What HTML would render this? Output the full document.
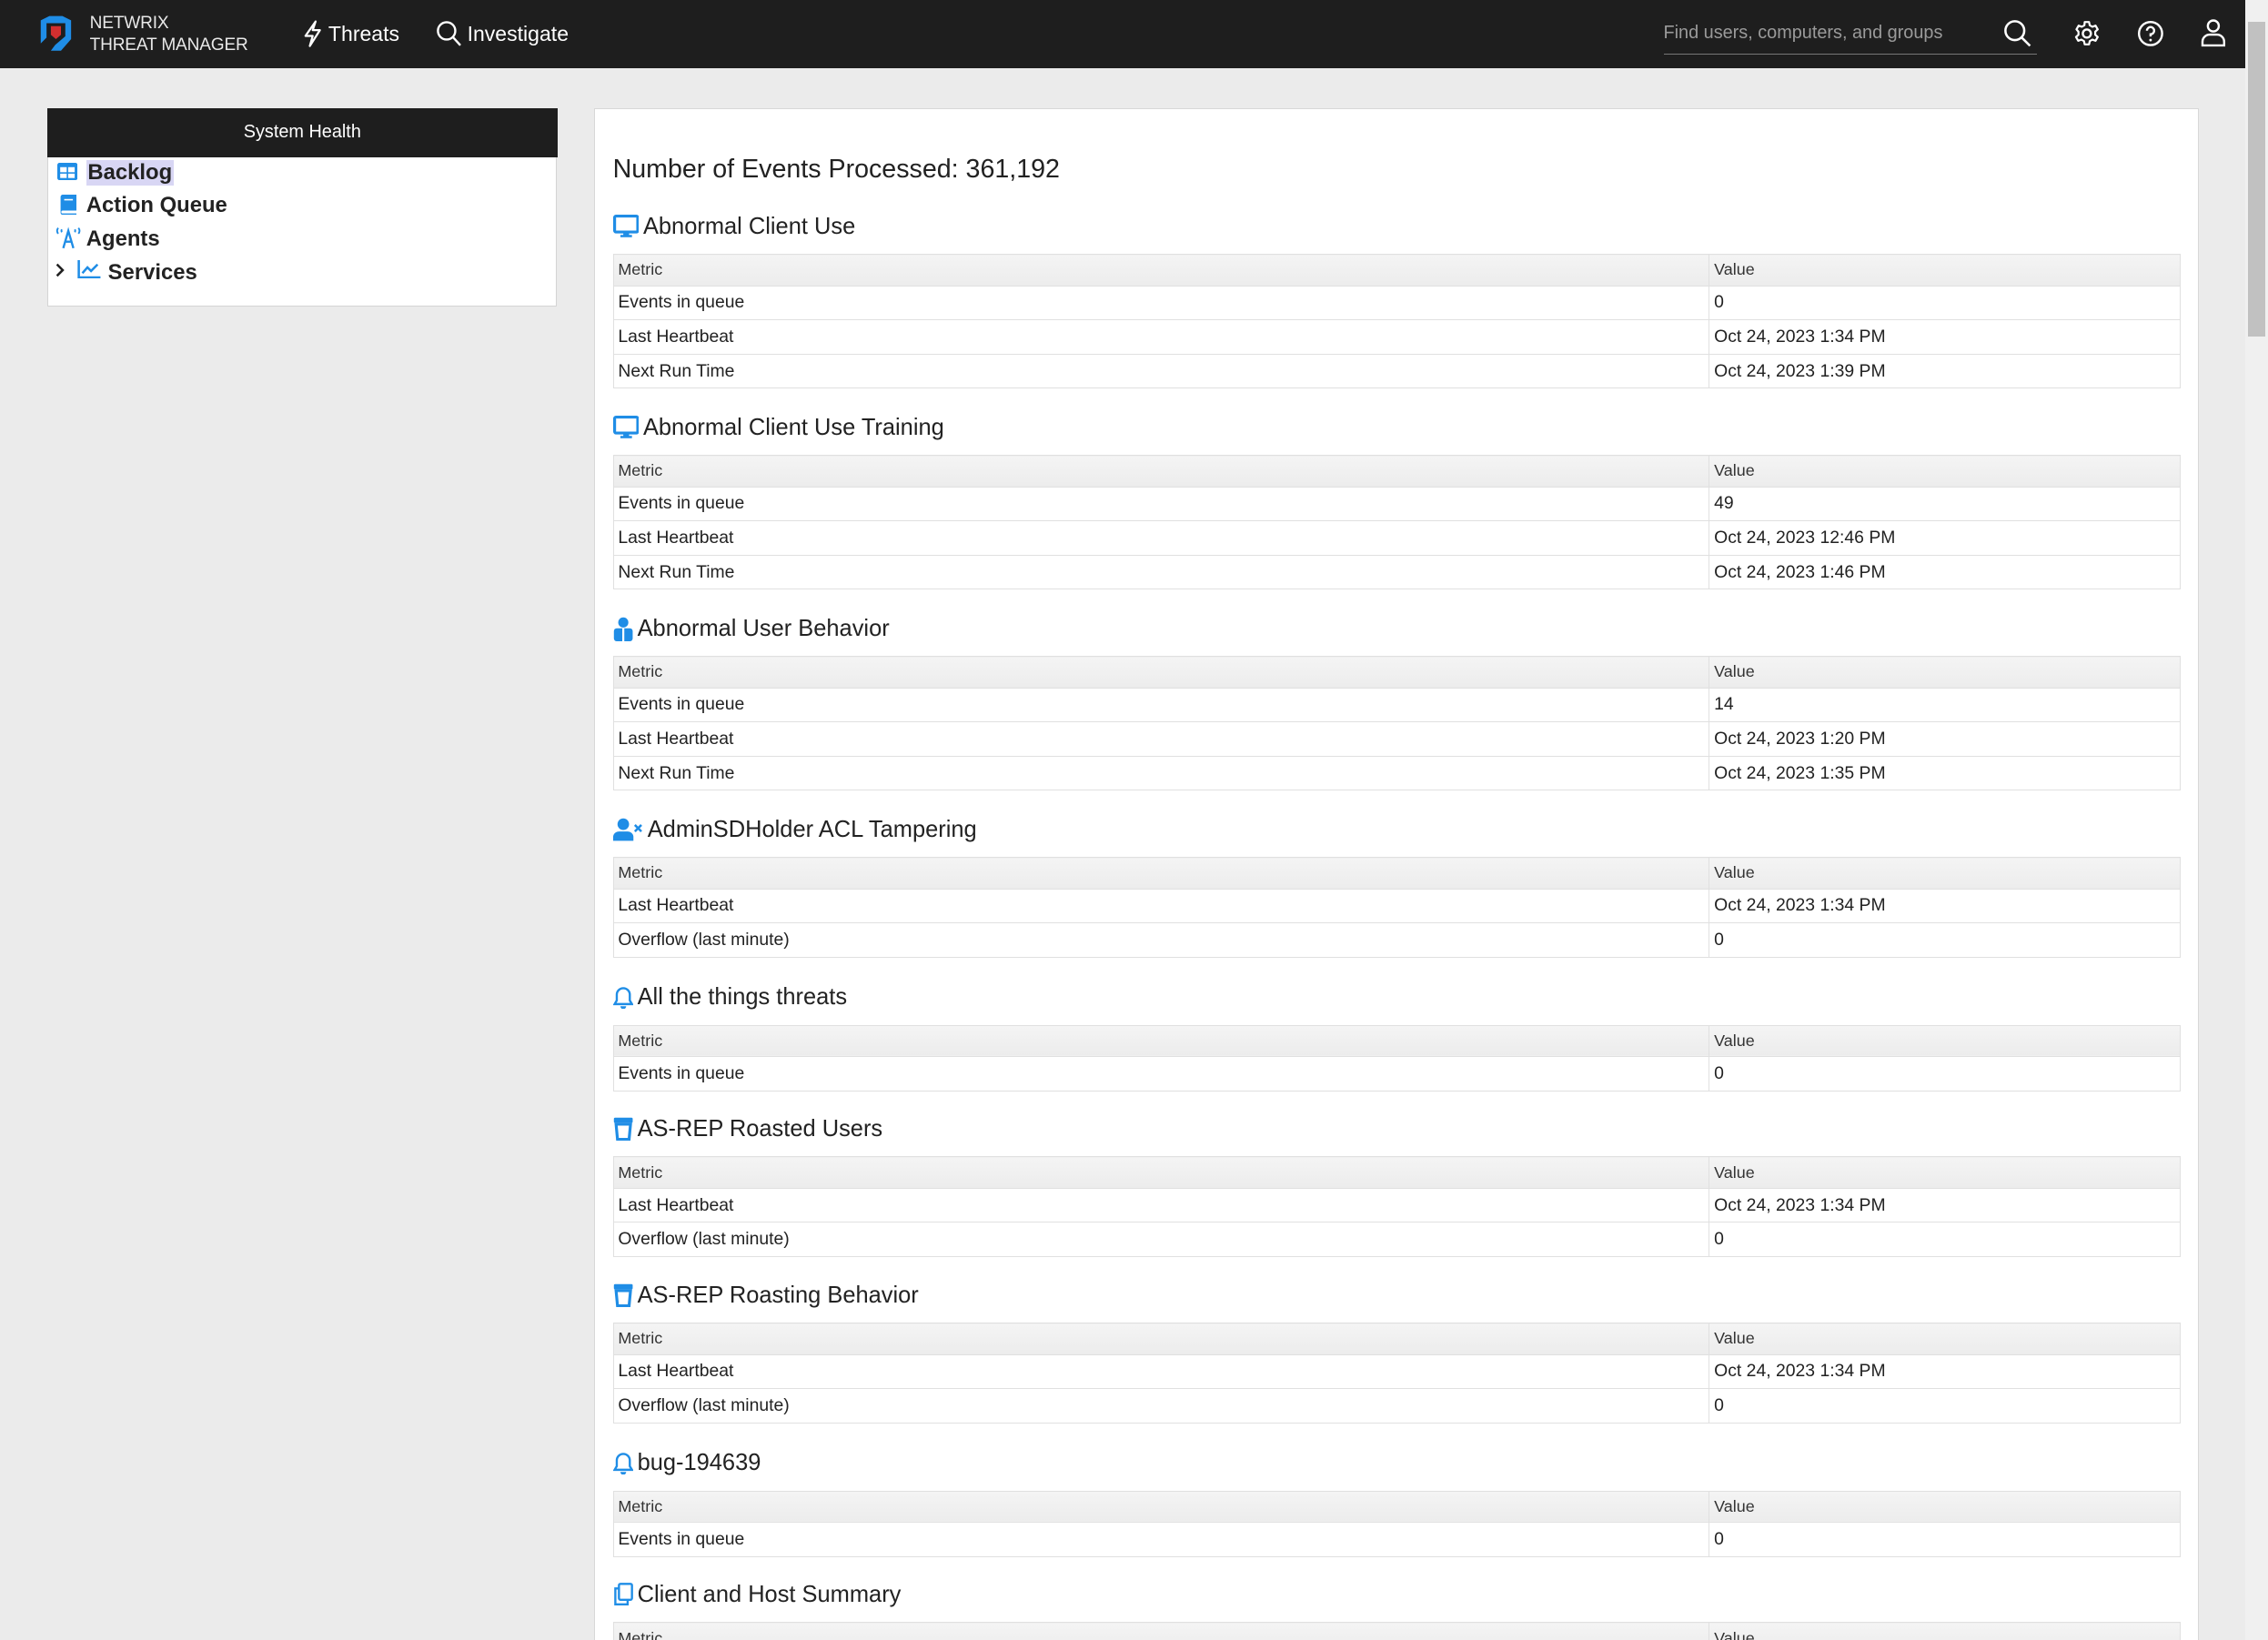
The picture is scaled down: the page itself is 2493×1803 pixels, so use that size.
<!DOCTYPE html>
<html><head><meta charset="utf-8"><style>
html{margin:0;padding:0;height:1803px;overflow:hidden;background:#ebebeb}
body{margin:0;padding:0;width:1568px;height:1134px;overflow:hidden;zoom:1.59;background:#ebebeb;font-family:"Liberation Sans",Arial,sans-serif;color:#222;position:relative;}
.top{position:absolute;left:0;top:0;width:1552px;height:47px;background:#1e1e1e;color:#fff;}
.logo{position:absolute;left:25px;top:10px;}
.brand{position:absolute;left:62px;top:9px;font-size:12px;line-height:15px;color:#e8e8e8;letter-spacing:-0.1px}
.nav{position:absolute;top:15px;font-size:14.5px;color:#fff}
.search{position:absolute;left:1150px;top:16px;width:258px;height:21px;border-bottom:1px solid #777;color:#9a9a9a;font-size:12.5px;}
.ic{position:absolute;top:12px}
.side{position:absolute;left:33px;top:75px;width:352px;height:137px;background:#fff;border:1px solid #d4d4d4;box-sizing:border-box}
.side .hd{background:#1e1e1e;color:#fff;height:34px;line-height:33px;text-align:center;font-size:12.5px;margin:-1px -1px 0 -1px}
.it{position:absolute;font-size:15px;font-weight:bold;color:#222}
.main{position:absolute;left:411px;top:75px;width:1109px;height:1059px;background:#fff;border:1px solid #d8d8d8;border-bottom:none;box-sizing:border-box;padding:0 12px;overflow:hidden}
h1{font-weight:normal;font-size:18px;margin:0;position:absolute;left:12px;top:31px}
.sec{position:absolute;left:12px;width:1084px}
.sec h3{font-weight:normal;font-size:16px;height:22px;line-height:22px;margin:0 0 8px 0;display:flex;align-items:center;gap:3px}
table{width:100%;border-collapse:collapse;font-size:12.2px}
td{border:1px solid #e0e0e0;padding:0 3px;height:23px}
tr.h td{background:linear-gradient(#f4f4f4,#ececec);height:21px;font-size:11.3px;color:#333}
td.v{width:319px}
.sb{position:absolute;left:1552px;top:0;width:16px;height:1134px;background:#f0f0f0}
.th{position:absolute;left:1554px;top:15px;width:12px;height:218px;background:#c1c1c1}
</style></head><body>
<div class="top">
 <svg class="logo" width="27" height="27" viewBox="0 0 27 27"><path d="M3 4 L9 1 L18 1 L24 4 L24 17 L17 25 L10 25 L13 21 L20 15 L20 6 L7 6 L7 16 L3 20 Z" fill="#1f8de6"/><path d="M10 8 L17 8 L17 14 L13.5 17 L10 14Z" fill="#d32f2f"/></svg>
 <div class="brand">NETWRIX<br>THREAT MANAGER</div>
 <svg class="ic" style="left:208px;top:14px" width="16" height="19" viewBox="0 0 16 19"><path d="M10 1 L3 11 L8 11 L6 18 L13 7 L8 7 Z" fill="none" stroke="#fff" stroke-width="1.4" stroke-linejoin="round"/></svg>
 <div class="nav" style="left:227px">Threats</div>
 <svg class="ic" style="left:301px;top:14px" width="18" height="19" viewBox="0 0 18 19"><circle cx="7.5" cy="7.5" r="6" fill="none" stroke="#fff" stroke-width="1.5"/><path d="M12 12 L17 17.5" stroke="#fff" stroke-width="1.5"/></svg>
 <div class="nav" style="left:323px">Investigate</div>
 <div class="search">Find users, computers, and groups</div>
 <svg class="ic" style="left:1385px;top:13px" width="20" height="20" viewBox="0 0 20 20"><circle cx="8" cy="8" r="6.5" fill="none" stroke="#fff" stroke-width="1.6"/><path d="M13 13 L18.5 18.5" stroke="#fff" stroke-width="1.6"/></svg>
 <svg class="ic" style="left:1433px;top:13px" width="20" height="20" viewBox="0 0 20 20"><circle cx="10" cy="10" r="2.8" fill="none" stroke="#fff" stroke-width="1.5"/><path d="M8.5 2h3l.5 2.3 1.8 1 2.2-.8 1.5 2.6-1.7 1.6v2.1l1.7 1.6-1.5 2.6-2.2-.8-1.8 1-.5 2.3h-3l-.5-2.3-1.8-1-2.2.8-1.5-2.6 1.7-1.6V8.7L2.8 7.1l1.5-2.6 2.2.8 1.8-1z" fill="none" stroke="#fff" stroke-width="1.4" stroke-linejoin="round"/></svg>
 <svg class="ic" style="left:1477px;top:13px" width="20" height="20" viewBox="0 0 20 20"><circle cx="10" cy="10" r="8" fill="none" stroke="#fff" stroke-width="1.5"/><path d="M7.5 8 A2.5 2.5 0 1 1 10 10.5 V12" fill="none" stroke="#fff" stroke-width="1.5"/><circle cx="10" cy="14.5" r="0.9" fill="#fff"/></svg>
 <svg class="ic" style="left:1520px;top:12px" width="20" height="22" viewBox="0 0 20 22"><circle cx="10" cy="6" r="3.8" fill="none" stroke="#fff" stroke-width="1.5"/><path d="M2.5 19.5 V17 A5 5 0 0 1 7.5 12 H12.5 A5 5 0 0 1 17.5 17 V19.5 Z" fill="none" stroke="#fff" stroke-width="1.5"/></svg>
</div>
<div class="side"><div class="hd">System Health</div>
 <svg style="position:absolute;left:6px;top:37px" width="14" height="12" viewBox="0 0 14 12"><rect x="0" y="0" width="14" height="12" rx="1.5" fill="#1f8de6"/><rect x="2" y="3" width="4.5" height="3.5" fill="#fff"/><rect x="7.5" y="3" width="4.5" height="3.5" fill="#fff"/><rect x="2" y="7.5" width="4.5" height="3" fill="#fff"/><rect x="7.5" y="7.5" width="4.5" height="3" fill="#fff"/></svg>
 <div class="it" style="left:26px;top:35px;background:#d8d6f4;padding:0 1px">Backlog</div>
 <svg style="position:absolute;left:7px;top:59px" width="12" height="14" viewBox="0 0 12 14"><path d="M1 1.5 A1.5 1.5 0 0 1 2.5 0 H12 V11 H2.5 A1 1 0 0 0 2.5 13 H12 V14 H2.5 A1.5 1.5 0 0 1 1 12.5Z" fill="#1f8de6"/><rect x="3.5" y="3" width="6" height="1" fill="#fff"/></svg>
 <div class="it" style="left:26px;top:58px">Action Queue</div>
 <svg style="position:absolute;left:4px;top:81px" width="19" height="16" viewBox="0 0 19 16"><path d="M2.5 1 Q1 3 2.5 5 M16.5 1 Q18 3 16.5 5 M5 2 Q4.5 3 5 4 M14 2 Q14.5 3 14 4" fill="none" stroke="#1f8de6" stroke-width="1.2"/><path d="M6 15 L9.5 3 L13 15 M7.3 10.5 H11.7" fill="none" stroke="#1f8de6" stroke-width="1.5"/></svg>
 <div class="it" style="left:26px;top:81px">Agents</div>
 <svg style="position:absolute;left:5px;top:106px" width="6" height="10" viewBox="0 0 6 10"><path d="M1 1 L5 5 L1 9" fill="none" stroke="#222" stroke-width="1.6"/></svg>
 <svg style="position:absolute;left:20px;top:104px" width="16" height="13" viewBox="0 0 16 13"><path d="M1 0 V12 H16" fill="none" stroke="#1f8de6" stroke-width="1.6"/><path d="M3.5 9 L7 5 L9.5 7.5 L14 3" fill="none" stroke="#1f8de6" stroke-width="1.6"/></svg>
 <div class="it" style="left:41px;top:104px">Services</div>
</div>
<div class="main">
<h1>Number of Events Processed: 361,192</h1>
<div class="sec" style="top:70px"><h3><svg width="18" height="16" viewBox="0 0 18 16"><rect x="1" y="1" width="16" height="11" rx="1" fill="none" stroke="#1f8de6" stroke-width="2"/><rect x="7" y="12" width="4" height="3" fill="#1f8de6"/><rect x="5" y="14" width="8" height="1.6" fill="#1f8de6"/></svg>Abnormal Client Use</h3>
<table><tr class="h"><td>Metric</td><td class="v">Value</td></tr><tr><td>Events in queue</td><td class="v">0</td></tr><tr><td>Last Heartbeat</td><td class="v">Oct 24, 2023 1:34 PM</td></tr><tr><td>Next Run Time</td><td class="v">Oct 24, 2023 1:39 PM</td></tr></table></div>
<div class="sec" style="top:209px"><h3><svg width="18" height="16" viewBox="0 0 18 16"><rect x="1" y="1" width="16" height="11" rx="1" fill="none" stroke="#1f8de6" stroke-width="2"/><rect x="7" y="12" width="4" height="3" fill="#1f8de6"/><rect x="5" y="14" width="8" height="1.6" fill="#1f8de6"/></svg>Abnormal Client Use Training</h3>
<table><tr class="h"><td>Metric</td><td class="v">Value</td></tr><tr><td>Events in queue</td><td class="v">49</td></tr><tr><td>Last Heartbeat</td><td class="v">Oct 24, 2023 12:46 PM</td></tr><tr><td>Next Run Time</td><td class="v">Oct 24, 2023 1:46 PM</td></tr></table></div>
<div class="sec" style="top:348px"><h3><svg width="14" height="17" viewBox="0 0 14 17"><circle cx="7" cy="4" r="3.5" fill="#1f8de6"/><rect x="0.5" y="8" width="13" height="9" rx="2" fill="#1f8de6"/><rect x="6.3" y="8" width="1.4" height="9" fill="#fff"/></svg>Abnormal User Behavior</h3>
<table><tr class="h"><td>Metric</td><td class="v">Value</td></tr><tr><td>Events in queue</td><td class="v">14</td></tr><tr><td>Last Heartbeat</td><td class="v">Oct 24, 2023 1:20 PM</td></tr><tr><td>Next Run Time</td><td class="v">Oct 24, 2023 1:35 PM</td></tr></table></div>
<div class="sec" style="top:487px"><h3><svg width="21" height="16" viewBox="0 0 21 16"><circle cx="7" cy="4.5" r="4" fill="#1f8de6"/><path d="M0 16 V13 A4 4 0 0 1 4 9.5 H10 A4 4 0 0 1 14 13 V16Z" fill="#1f8de6"/><path d="M15 5 L19.5 9.5 M19.5 5 L15 9.5" stroke="#1f8de6" stroke-width="1.6"/></svg>AdminSDHolder ACL Tampering</h3>
<table><tr class="h"><td>Metric</td><td class="v">Value</td></tr><tr><td>Last Heartbeat</td><td class="v">Oct 24, 2023 1:34 PM</td></tr><tr><td>Overflow (last minute)</td><td class="v">0</td></tr></table></div>
<div class="sec" style="top:603px"><h3><svg width="14" height="16" viewBox="0 0 14 16"><path d="M7 1.5 A4.5 4.5 0 0 1 11.5 6 V10 L13 12.5 H1 L2.5 10 V6 A4.5 4.5 0 0 1 7 1.5Z" fill="none" stroke="#1f8de6" stroke-width="1.5"/><path d="M5 14 A2 2 0 0 0 9 14Z" fill="#1f8de6"/></svg>All the things threats</h3>
<table><tr class="h"><td>Metric</td><td class="v">Value</td></tr><tr><td>Events in queue</td><td class="v">0</td></tr></table></div>
<div class="sec" style="top:694px"><h3><svg width="14" height="16" viewBox="0 0 14 16"><rect x="0.5" y="0.5" width="13" height="3.5" rx="0.8" fill="#1f8de6"/><path d="M2 5 H12 L11 15.5 H3 Z" fill="none" stroke="#1f8de6" stroke-width="2"/></svg>AS-REP Roasted Users</h3>
<table><tr class="h"><td>Metric</td><td class="v">Value</td></tr><tr><td>Last Heartbeat</td><td class="v">Oct 24, 2023 1:34 PM</td></tr><tr><td>Overflow (last minute)</td><td class="v">0</td></tr></table></div>
<div class="sec" style="top:809px"><h3><svg width="14" height="16" viewBox="0 0 14 16"><rect x="0.5" y="0.5" width="13" height="3.5" rx="0.8" fill="#1f8de6"/><path d="M2 5 H12 L11 15.5 H3 Z" fill="none" stroke="#1f8de6" stroke-width="2"/></svg>AS-REP Roasting Behavior</h3>
<table><tr class="h"><td>Metric</td><td class="v">Value</td></tr><tr><td>Last Heartbeat</td><td class="v">Oct 24, 2023 1:34 PM</td></tr><tr><td>Overflow (last minute)</td><td class="v">0</td></tr></table></div>
<div class="sec" style="top:925px"><h3><svg width="14" height="16" viewBox="0 0 14 16"><path d="M7 1.5 A4.5 4.5 0 0 1 11.5 6 V10 L13 12.5 H1 L2.5 10 V6 A4.5 4.5 0 0 1 7 1.5Z" fill="none" stroke="#1f8de6" stroke-width="1.5"/><path d="M5 14 A2 2 0 0 0 9 14Z" fill="#1f8de6"/></svg>bug-194639</h3>
<table><tr class="h"><td>Metric</td><td class="v">Value</td></tr><tr><td>Events in queue</td><td class="v">0</td></tr></table></div>
<div class="sec" style="top:1016px"><h3><svg width="14" height="16" viewBox="0 0 14 16"><rect x="4" y="0.8" width="9" height="11" rx="1" fill="none" stroke="#1f8de6" stroke-width="1.5"/><path d="M4 4 H1.5 V15 H10 V12" fill="none" stroke="#1f8de6" stroke-width="1.5"/></svg>Client and Host Summary</h3>
<table><tr class="h"><td>Metric</td><td class="v">Value</td></tr><tr><td>&nbsp;</td><td class="v"></td></tr></table></div>
</div>
<div class="sb"></div><div class="th"></div>
</body></html>
